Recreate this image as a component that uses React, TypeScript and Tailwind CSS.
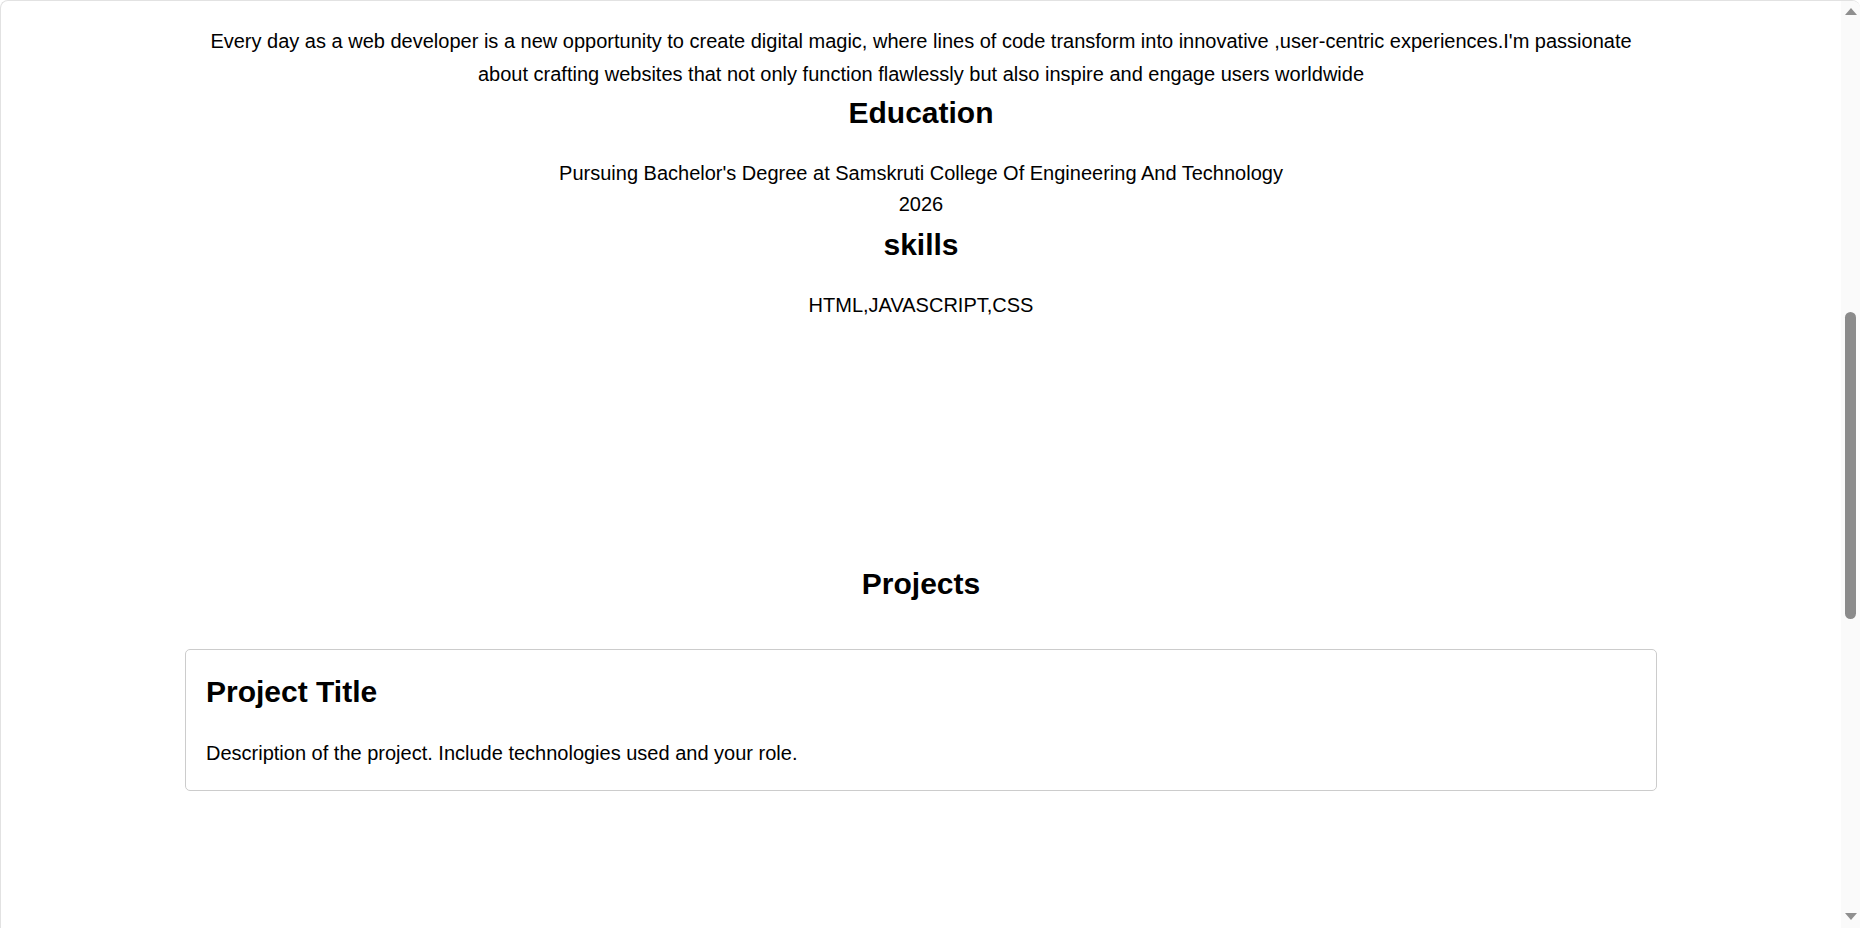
import * as React from "react";

const font = { fontFamily: '"Liberation Sans", Arial, sans-serif' };

function Scrollbar() {
  return (
    <div className="w-[19px] h-full bg-[#fafafa] flex flex-col items-center shrink-0">
      <svg width="12" height="7" viewBox="0 0 12 7" className="mt-[7px]">
        <polygon points="6,0 12,7 0,7" fill="#8f8f8f" />
      </svg>
      <div className="mt-[297px] w-[11px] h-[307px] rounded-full bg-[#8b8b8b]" />
      <div className="flex-1" />
      <svg width="12" height="7" viewBox="0 0 12 7" className="mb-[8px]">
        <polygon points="0,0 12,0 6,7" fill="#8f8f8f" />
      </svg>
    </div>
  );
}

function ProjectCard({ title, description }: { title: string; description: string }) {
  return (
    <div className="border border-[#cccccc] rounded-[5px] px-5 pt-[25px] pb-[20px] text-left">
      <h3 className="text-[30px] leading-[34px] font-bold text-black">{title}</h3>
      <p className="mt-[28px] text-[20px] leading-[33px] text-black">{description}</p>
    </div>
  );
}

export default function App() {
  return (
    <div
      className="h-screen w-full flex bg-white border-t border-l border-[#e2e2e2] rounded-t-[8px] overflow-hidden"
      style={font}
    >
      <main className="flex-1 min-w-0 overflow-hidden">
        <div className="w-4/5 mx-auto text-center text-black pt-[24px]">
          <p className="text-[20px] leading-[33px]">
            Every day as a web developer is a new opportunity to create digital magic, where lines of code
            transform into innovative ,user-centric experiences.I'm passionate about crafting websites that not
            only function flawlessly but also inspire and engage users worldwide
          </p>

          <h2 className="mt-[5px] text-[30px] leading-[34px] font-bold">Education</h2>
          <div className="mt-[28px] text-[20px] leading-[31px]">
            <p>Pursuing Bachelor's Degree at Samskruti College Of Engineering And Technology</p>
            <p>2026</p>
          </div>

          <h2 className="mt-[8px] text-[30px] leading-[34px] font-bold">skills</h2>
          <p className="mt-[27px] text-[20px] leading-[33px]">HTML,JAVASCRIPT,CSS</p>

          <section className="mt-[245px]">
            <h2 className="text-[30px] leading-[34px] font-bold">Projects</h2>
            <div className="mt-[48px]">
              <ProjectCard
                title="Project Title"
                description="Description of the project. Include technologies used and your role."
              />
            </div>
          </section>
        </div>
      </main>
      <Scrollbar />
    </div>
  );
}
